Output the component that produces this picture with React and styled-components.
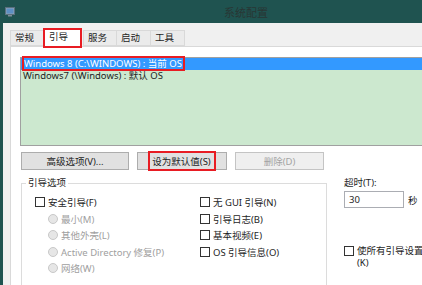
import React from 'react';
import styled, { createGlobalStyle } from 'styled-components';

const Global = createGlobalStyle`
  html, body {
    margin: 0;
    padding: 0;
    overflow: hidden;
    background: #1f5350;
  }
  body {
    font-family: "Noto Sans", "Noto Sans CJK SC", sans-serif;
    font-size: 9.5px;
    color: #1e1e1e;
  }
`;

const Window = styled.div`
  width: 496px;
  height: 285px;
  display: flex;
  flex-direction: column;
  background: #1f5350;
`;

const TitleBar = styled.div`
  height: 23px;
  flex: none;
  display: flex;
  align-items: center;
  padding: 0 15px 0 5px;
`;

const TitleText = styled.div`
  flex: 1;
  text-align: center;
  font-size: 11px;
  color: #283634;
  margin-left: -4px;
`;

const Body = styled.div`
  flex: 1;
  margin-left: 3px;
  background: #f0f0f0;
  padding: 7px 0 0 7px;
  display: flex;
  flex-direction: column;
  overflow: hidden;
`;

const TabStrip = styled.div`
  display: flex;
  align-items: flex-end;
  height: 16px;
  position: relative;
  z-index: 1;
`;

const Tab = styled.div`
  box-sizing: border-box;
  width: ${p => (p.$active ? '37px' : '34px')};
  height: ${p => (p.$active ? '18px' : '16px')};
  margin-right: ${p => (p.$active ? '2px' : '0')};
  margin-bottom: ${p => (p.$active ? '-1px' : '0')};
  border: 1px solid #d9d9d9;
  border-bottom: ${p => (p.$active ? 'none' : '1px solid #d9d9d9')};
  border-left: ${p => (p.$first || p.$active ? '1px solid #d9d9d9' : 'none')};
  background: ${p => (p.$active ? '#ffffff' : '#ebebeb')};
  padding-left: 4px;
  line-height: 14px;
  outline: ${p => (p.$marked ? '2px solid #e81c23' : 'none')};
  outline-offset: -1px;
`;

const Panel = styled.div`
  flex: 1;
  background: #ffffff;
  border: 1px solid #d9d9d9;
  border-right: none;
  padding: 10px 0 0 9px;
`;

const List = styled.div`
  box-sizing: border-box;
  width: 480px;
  height: 89px;
  border: 1px solid #a0a0a0;
  background: #cce8cf;
`;

const ListRow = styled.div`
  height: 12px;
  line-height: 12px;
  padding-left: 2px;
  white-space: nowrap;
  background: ${p => (p.$selected ? '#3399ff' : 'transparent')};
  color: ${p => (p.$selected ? '#ffffff' : '#1e1e1e')};
`;

const Marked = styled.span`
  outline: 2px solid #e81c23;
  outline-offset: ${p => p.$offset || 0}px;
  padding: 0 2px 0 1px;
`;

const ButtonRow = styled.div`
  display: flex;
  gap: 8px;
  margin: 6px 0 0 1px;
`;

const Button = styled.div`
  box-sizing: border-box;
  width: ${p => p.$w}px;
  height: 18px;
  border: 1px solid ${p => (p.$disabled ? '#c4c4c4' : '#adadad')};
  background: ${p => (p.$disabled ? '#efefef' : '#e1e1e1')};
  color: ${p => (p.$disabled ? '#a3a3a3' : '#1e1e1e')};
  display: flex;
  align-items: center;
  justify-content: center;
  white-space: nowrap;
`;

const Lower = styled.div`
  display: grid;
  grid-template-columns: 306px 1fr;
  column-gap: 17px;
  margin: 7px 0 0 1px;
`;

const Group = styled.div`
  box-sizing: border-box;
  position: relative;
  border: 1px solid #dcdcdc;
  margin-top: 6px;
  height: 110px;
  padding: 10px 0 0 13px;
  display: grid;
  grid-template-columns: 165px 1fr;
`;

const GroupLabel = styled.span`
  position: absolute;
  top: -7px;
  left: 4px;
  background: #ffffff;
  padding: 0 2px;
  line-height: 12px;
`;

const Column = styled.div`
  display: flex;
  flex-direction: column;
`;

const OptionRow = styled.div`
  height: 16.5px;
  display: flex;
  align-items: center;
  gap: 3px;
  padding-left: ${p => (p.$indent ? '13px' : '0')};
  color: ${p => (p.$disabled ? '#a0a0a0' : '#1e1e1e')};
  white-space: nowrap;
`;

const Box = styled.span`
  box-sizing: border-box;
  width: 10px;
  height: 10px;
  flex: none;
  margin-top: ${p => p.$top || 0}px;
  border: 1px solid #333333;
  background: #ffffff;
`;

const Radio = styled.span`
  box-sizing: border-box;
  width: 10px;
  height: 10px;
  flex: none;
  border-radius: 50%;
  border: 1px solid #c8c8c8;
  background: #e6e6e6;
`;

const Side = styled.div`
  display: flex;
  flex-direction: column;
`;

const FieldLabel = styled.div`
  line-height: 12px;
`;

const InputRow = styled.div`
  display: flex;
  align-items: center;
  gap: 4px;
  margin-top: 2px;
`;

const Input = styled.div`
  box-sizing: border-box;
  width: 60px;
  height: 17px;
  border: 1px solid #abadb3;
  background: #ffffff;
  padding-left: 4px;
  line-height: 15px;
`;

const CheckLine = styled.div`
  display: flex;
  align-items: flex-start;
  gap: 3px;
  margin-top: 37px;
  line-height: 12px;
  white-space: nowrap;
`;

const MonitorIcon = () => (
  <svg width="10" height="10" viewBox="0 0 10 10">
    <rect x="0.5" y="0.5" width="9" height="7" fill="#8fa5b4" stroke="#5b6f7d" />
    <rect x="1.5" y="1.5" width="7" height="5" fill="#5d8fc4" />
    <rect x="3" y="8" width="4" height="1.5" fill="#7c8d98" />
  </svg>
);

const App = () => (
  <Window>
    <Global />
    <TitleBar>
      <MonitorIcon />
      <TitleText>系统配置</TitleText>
    </TitleBar>
    <Body>
      <TabStrip>
        <Tab $first>常规</Tab>
        <Tab $active $marked>引导</Tab>
        <Tab $first>服务</Tab>
        <Tab>启动</Tab>
        <Tab>工具</Tab>
      </TabStrip>
      <Panel>
        <List>
          <ListRow $selected>
            <Marked $offset={-1}>Windows 8 (C:\WINDOWS) : 当前 OS</Marked>
          </ListRow>
          <ListRow>Windows7 (\Windows) : 默认 OS</ListRow>
        </List>
        <ButtonRow>
          <Button $w={108}>高级选项(V)...</Button>
          <Button $w={90}>
            <Marked $offset={1}>设为默认值(S)</Marked>
          </Button>
          <Button $w={89} $disabled>删除(D)</Button>
        </ButtonRow>
        <Lower>
          <Group>
            <GroupLabel>引导选项</GroupLabel>
            <Column>
              <OptionRow><Box />安全引导(F)</OptionRow>
              <OptionRow $indent $disabled><Radio />最小(M)</OptionRow>
              <OptionRow $indent $disabled><Radio />其他外壳(L)</OptionRow>
              <OptionRow $indent $disabled><Radio />Active Directory 修复(P)</OptionRow>
              <OptionRow $indent $disabled><Radio />网络(W)</OptionRow>
            </Column>
            <Column>
              <OptionRow><Box />无 GUI 引导(N)</OptionRow>
              <OptionRow><Box />引导日志(B)</OptionRow>
              <OptionRow><Box />基本视频(E)</OptionRow>
              <OptionRow><Box />OS 引导信息(O)</OptionRow>
            </Column>
          </Group>
          <Side>
            <FieldLabel>超时(T):</FieldLabel>
            <InputRow>
              <Input>30</Input>
              <span>秒</span>
            </InputRow>
            <CheckLine>
              <Box $top={1} />
              <div>
                使所有引导设置成为永久设置
                <br />
                (K)
              </div>
            </CheckLine>
          </Side>
        </Lower>
      </Panel>
    </Body>
  </Window>
);

export default App;
